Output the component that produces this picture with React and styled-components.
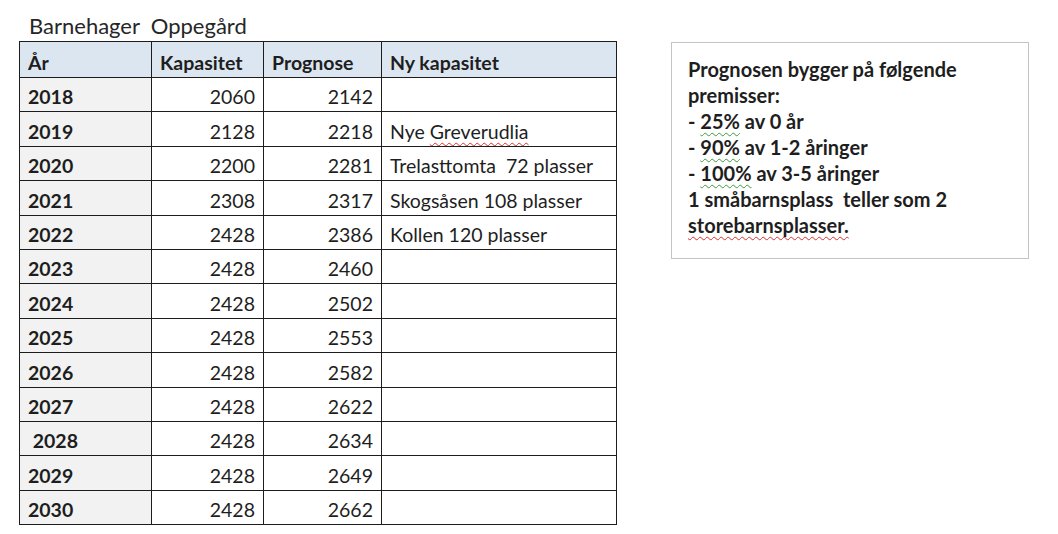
import React from "react";
import styled, { createGlobalStyle } from "styled-components";

const GlobalStyle = createGlobalStyle`
  html, body {
    margin: 0;
    padding: 0;
    background: #ffffff;
  }
  body {
    font-family: Lato, "Open Sans", "Liberation Sans", sans-serif;
    color: #1e1e1e;
  }
`;

const Page = styled.div`
  width: 1058px;
  height: 534px;
  display: flex;
  align-items: flex-start;
  padding: 10px 0 0 19px;
  box-sizing: border-box;
  gap: 54px;
`;

const Sheet = styled.div`
  display: flex;
  flex-direction: column;
`;

const Caption = styled.div`
  font-size: 22px;
  line-height: 31px;
  padding-left: 10px;
  white-space: pre;
  color: #262626;
`;

const Table = styled.table`
  border-collapse: collapse;
  table-layout: fixed;
  width: 597px;
  font-size: 19.5px;
`;

const HeadRow = styled.tr`
  height: 36px;
  background: #dce6f1;
`;

const Row = styled.tr`
  height: 34.4px;
`;

const Th = styled.th`
  box-sizing: border-box;
  border: 1.6px solid #1c1c1c;
  text-align: left;
  font-weight: 700;
  padding: 0 6px 3px 8px;
  vertical-align: bottom;
  white-space: nowrap;
  width: ${(p) => p.w}px;
`;

const Td = styled.td`
  box-sizing: border-box;
  border: 1.6px solid #1c1c1c;
  padding: 0 8px 3px 8px;
  vertical-align: bottom;
  white-space: pre;
  overflow: hidden;
  text-align: ${(p) => (p.num ? "right" : "left")};
  font-weight: ${(p) => (p.year ? 700 : 400)};
  background: ${(p) => (p.year ? "#f2f2f2" : "#ffffff")};
`;

const Squiggle = styled.span`
  text-decoration: underline wavy ${(p) => (p.green ? "#3c9a3c" : "#d83030")};
  text-decoration-thickness: 1px;
  text-underline-offset: 3px;
`;

const NoteBox = styled.div`
  margin-top: 32px;
  width: 358px;
  height: 217px;
  box-sizing: border-box;
  border: 1.6px solid #c4c4c4;
  padding: 13px 8px 0 16px;
  font-size: 20px;
  font-weight: 700;
  line-height: 26px;
  color: #1e1e1e;
`;

const NoteLine = styled.div`
  white-space: pre;
`;

const rows = [
  ["2018", "2060", "2142", ""],
  ["2019", "2128", "2218", "greverud"],
  ["2020", "2200", "2281", "Trelasttomta  72 plasser"],
  ["2021", "2308", "2317", "Skogsåsen 108 plasser"],
  ["2022", "2428", "2386", "Kollen 120 plasser"],
  ["2023", "2428", "2460", ""],
  ["2024", "2428", "2502", ""],
  ["2025", "2428", "2553", ""],
  ["2026", "2428", "2582", ""],
  ["2027", "2428", "2622", ""],
  [" 2028", "2428", "2634", ""],
  ["2029", "2428", "2649", ""],
  ["2030", "2428", "2662", ""],
];

export default function App() {
  return (
    <>
      <GlobalStyle />
      <Page>
        <Sheet>
          <Caption>Barnehager  Oppegård</Caption>
          <Table>
            <thead>
              <HeadRow>
                <Th w={132}>År</Th>
                <Th w={112}>Kapasitet</Th>
                <Th w={118}>Prognose</Th>
                <Th w={235}>Ny kapasitet</Th>
              </HeadRow>
            </thead>
            <tbody>
              {rows.map(([year, cap, prog, ny]) => (
                <Row key={year}>
                  <Td year>{year}</Td>
                  <Td num>{cap}</Td>
                  <Td num>{prog}</Td>
                  <Td>
                    {ny === "greverud" ? (
                      <>
                        Nye <Squiggle>Greverudlia</Squiggle>
                      </>
                    ) : (
                      ny
                    )}
                  </Td>
                </Row>
              ))}
            </tbody>
          </Table>
        </Sheet>
        <NoteBox>
          <NoteLine>Prognosen bygger på følgende</NoteLine>
          <NoteLine>premisser:</NoteLine>
          <NoteLine>
            - <Squiggle green>25%</Squiggle> av 0 år
          </NoteLine>
          <NoteLine>
            - <Squiggle green>90%</Squiggle> av 1-2 åringer
          </NoteLine>
          <NoteLine>
            - <Squiggle green>100%</Squiggle> av 3-5 åringer
          </NoteLine>
          <NoteLine>1 småbarnsplass  teller som 2</NoteLine>
          <NoteLine>
            <Squiggle>storebarnsplasser.</Squiggle>
          </NoteLine>
        </NoteBox>
      </Page>
    </>
  );
}
